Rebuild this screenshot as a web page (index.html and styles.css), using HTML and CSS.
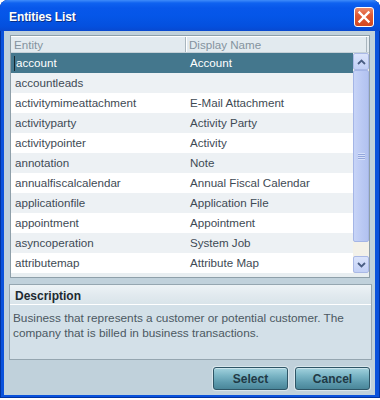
FILE: index.html
```html
<!DOCTYPE html>
<html>
<head>
<meta charset="utf-8">
<link rel="stylesheet" href="styles.css">
</head>
<body>
<div class="window">
  <div class="titlebar">
    <span class="title">Entities List</span>
    <span class="close">
      <svg width="14" height="14" viewBox="0 0 14 14"><path d="M2.5 2.5 L11.5 11.5 M11.5 2.5 L2.5 11.5" stroke="#fff" stroke-width="2.4" stroke-linecap="square"/></svg>
    </span>
  </div>
  <div class="client">
    <div class="list">
      <div class="head">
        <div class="hcell c1">Entity</div>
        <div class="hcell c2">Display Name</div>
      </div>
      <div class="body">
        <div class="rows">
          <div class="row sel"><div class="cell c1"><span class="focus"></span>account</div><div class="cell c2">Account</div></div>
          <div class="row alt"><div class="cell c1">accountleads</div><div class="cell c2"></div></div>
          <div class="row"><div class="cell c1">activitymimeattachment</div><div class="cell c2">E-Mail Attachment</div></div>
          <div class="row alt"><div class="cell c1">activityparty</div><div class="cell c2">Activity Party</div></div>
          <div class="row"><div class="cell c1">activitypointer</div><div class="cell c2">Activity</div></div>
          <div class="row alt"><div class="cell c1">annotation</div><div class="cell c2">Note</div></div>
          <div class="row"><div class="cell c1">annualfiscalcalendar</div><div class="cell c2">Annual Fiscal Calendar</div></div>
          <div class="row alt"><div class="cell c1">applicationfile</div><div class="cell c2">Application File</div></div>
          <div class="row"><div class="cell c1">appointment</div><div class="cell c2">Appointment</div></div>
          <div class="row alt"><div class="cell c1">asyncoperation</div><div class="cell c2">System Job</div></div>
          <div class="row"><div class="cell c1">attributemap</div><div class="cell c2">Attribute Map</div></div>
        </div>
        <div class="scrollbar">
          <div class="sbtn">
            <svg width="9" height="6" viewBox="0 0 9 6"><path d="M1 5 L4.5 1.5 L8 5" fill="none" stroke="#4a5e84" stroke-width="1.8"/></svg>
          </div>
          <div class="thumb"><span class="grip"></span></div>
          <div class="track"></div>
          <div class="sbtn">
            <svg width="9" height="6" viewBox="0 0 9 6"><path d="M1 1 L4.5 4.5 L8 1" fill="none" stroke="#4a5e84" stroke-width="1.8"/></svg>
          </div>
        </div>
      </div>
    </div>
    <div class="desc">
      <div class="dhead">Description</div>
      <div class="dbody">Business that represents a customer or potential customer. The company that is billed in business transactions.</div>
    </div>
    <div class="buttons">
      <span class="btn">Select</span>
      <span class="btn">Cancel</span>
    </div>
  </div>
</div>
</body>
</html>
```

FILE: styles.css
```css
html, body {
  margin: 0;
  padding: 0;
  background: #ffffff;
}
body {
  font-family: "Liberation Sans", Arial, sans-serif;
  width: 380px;
  height: 400px;
  overflow: hidden;
}
.window {
  width: 380px;
  height: 398px;
  box-sizing: border-box;
  background: #0a52dc;
  border-radius: 8px 8px 0 0;
  box-shadow: inset 1px 0 0 #0033a0, inset -1px 0 0 #0033a0, inset 0 -1px 0 #0033a0;
  display: flex;
  flex-direction: column;
}
.titlebar {
  height: 31px;
  box-sizing: border-box;
  padding: 3px 6px 0 9px;
  display: flex;
  align-items: center;
  border-radius: 8px 8px 0 0;
  background: linear-gradient(180deg, #3f8cfa 0px, #0f62f0 3px, #0757ea 8px, #0556e8 50%, #0450de 85%, #0849d0 100%);
}
.title {
  color: #ffffff;
  font-weight: bold;
  font-size: 12px;
  line-height: 14px;
  text-shadow: 1px 1px 0 #0a2f86;
  letter-spacing: -0.1px;
}
.close {
  margin-left: auto;
  width: 20px;
  height: 20px;
  box-sizing: border-box;
  border: 1px solid #ffffff;
  border-radius: 3px;
  background: linear-gradient(180deg, #ec8a6a 0%, #e05a34 40%, #d24820 100%);
  display: flex;
  align-items: center;
  justify-content: center;
}
.client {
  flex: 1;
  margin: 0 5px 3px 4px;
  background: #c0d1db;
  padding: 4px 5px 0 6px;
  display: flex;
  flex-direction: column;
}
.list {
  height: 243px;
  box-sizing: border-box;
  border: 1px solid #8e9fa9;
  background: #e8eef1;
  display: flex;
  flex-direction: column;
}
.head {
  height: 17px;
  box-sizing: border-box;
  display: flex;
  background: #e2eaef;
  border-top: 1px solid #ffffff;
  border-bottom: 1px solid #c4d0d7;
}
.hcell {
  font-size: 11.6px;
  color: #84939e;
  line-height: 15px;
  padding-left: 3px;
  box-sizing: border-box;
}
.hcell.c1 {
  width: 175px;
  border-right: 1px solid #a9b6be;
  box-shadow: 1px 0 0 #ffffff;
}
.hcell.c2 {
  flex: 1;
  padding-left: 3px;
  margin-right: 2px;
  border-right: 1px solid #a9b6be;
}
.body {
  display: flex;
  height: 220px;
}
.rows {
  flex: 1;
  display: flex;
  flex-direction: column;
}
.row {
  height: 20px;
  display: flex;
  background: #ffffff;
  color: #3e4a54;
  font-size: 11.6px;
  line-height: 20px;
}
.row.alt {
  background: #edf1f4;
}
.row.sel {
  background: #44778d;
  color: #ffffff;
}
.cell {
  box-sizing: border-box;
  padding-left: 4px;
  white-space: nowrap;
  display: flex;
  align-items: center;
}
.cell.c1 {
  width: 175px;
}
.cell.c2 {
  flex: 1;
}
.focus {
  width: 1px;
  height: 15px;
  background: #17272f;
  margin-left: -1px;
  margin-right: 1px;
}
.scrollbar {
  width: 16px;
  display: flex;
  flex-direction: column;
  background: #f3f1e9;
}
.sbtn {
  height: 17px;
  box-sizing: border-box;
  border: 1px solid #aab9e6;
  border-radius: 2px;
  background: linear-gradient(180deg, #dbe4fb 0%, #c2d0f6 100%);
  display: flex;
  align-items: center;
  justify-content: center;
}
.thumb {
  height: 172px;
  box-sizing: border-box;
  border: 1px solid #a4b5e6;
  border-radius: 2px;
  background: linear-gradient(90deg, #c7d4f7 0%, #b9c8f3 60%, #b2c2f0 100%);
  display: flex;
  align-items: center;
  justify-content: center;
}
.grip {
  width: 7px;
  height: 7px;
  background: repeating-linear-gradient(180deg, #d6e0fa 0px, #d6e0fa 1px, #93a6dc 1px, #93a6dc 2px);
}
.track {
  flex: 1;
}
.desc {
  margin-top: 6px;
  margin-left: -1px;
  margin-right: -2px;
  height: 76px;
  box-sizing: border-box;
  border: 1px solid #95a6b0;
  background: #d3e0e8;
  display: flex;
  flex-direction: column;
}
.dhead {
  height: 20px;
  box-sizing: border-box;
  padding: 5px 0 0 5px;
  font-size: 12px;
  line-height: 13px;
  font-weight: bold;
  color: #1d2a32;
  border-bottom: 1px solid #ffffff;
  background: linear-gradient(180deg, #edf3f6 0%, #e2eaef 50%, #d9e4ea 100%);
}
.dbody {
  padding: 6px 6px 0 3px;
  font-size: 11.8px;
  line-height: 15px;
  color: #4b5862;
}
.buttons {
  margin-top: 7px;
  display: flex;
  justify-content: flex-end;
  gap: 7px;
}
.btn {
  width: 75px;
  height: 23px;
  box-sizing: border-box;
  border: 1px solid #2e5566;
  border-radius: 3px;
  background: linear-gradient(180deg, #a3d2de 0%, #7cb6c6 35%, #5c9aad 70%, #4a8699 100%);
  box-shadow: inset 0 1px 0 #c9e4ec, 0 0 0 1px #d9e6ec;
  color: #1f3945;
  font-size: 12px;
  font-weight: bold;
  display: flex;
  align-items: center;
  justify-content: center;
}
```
